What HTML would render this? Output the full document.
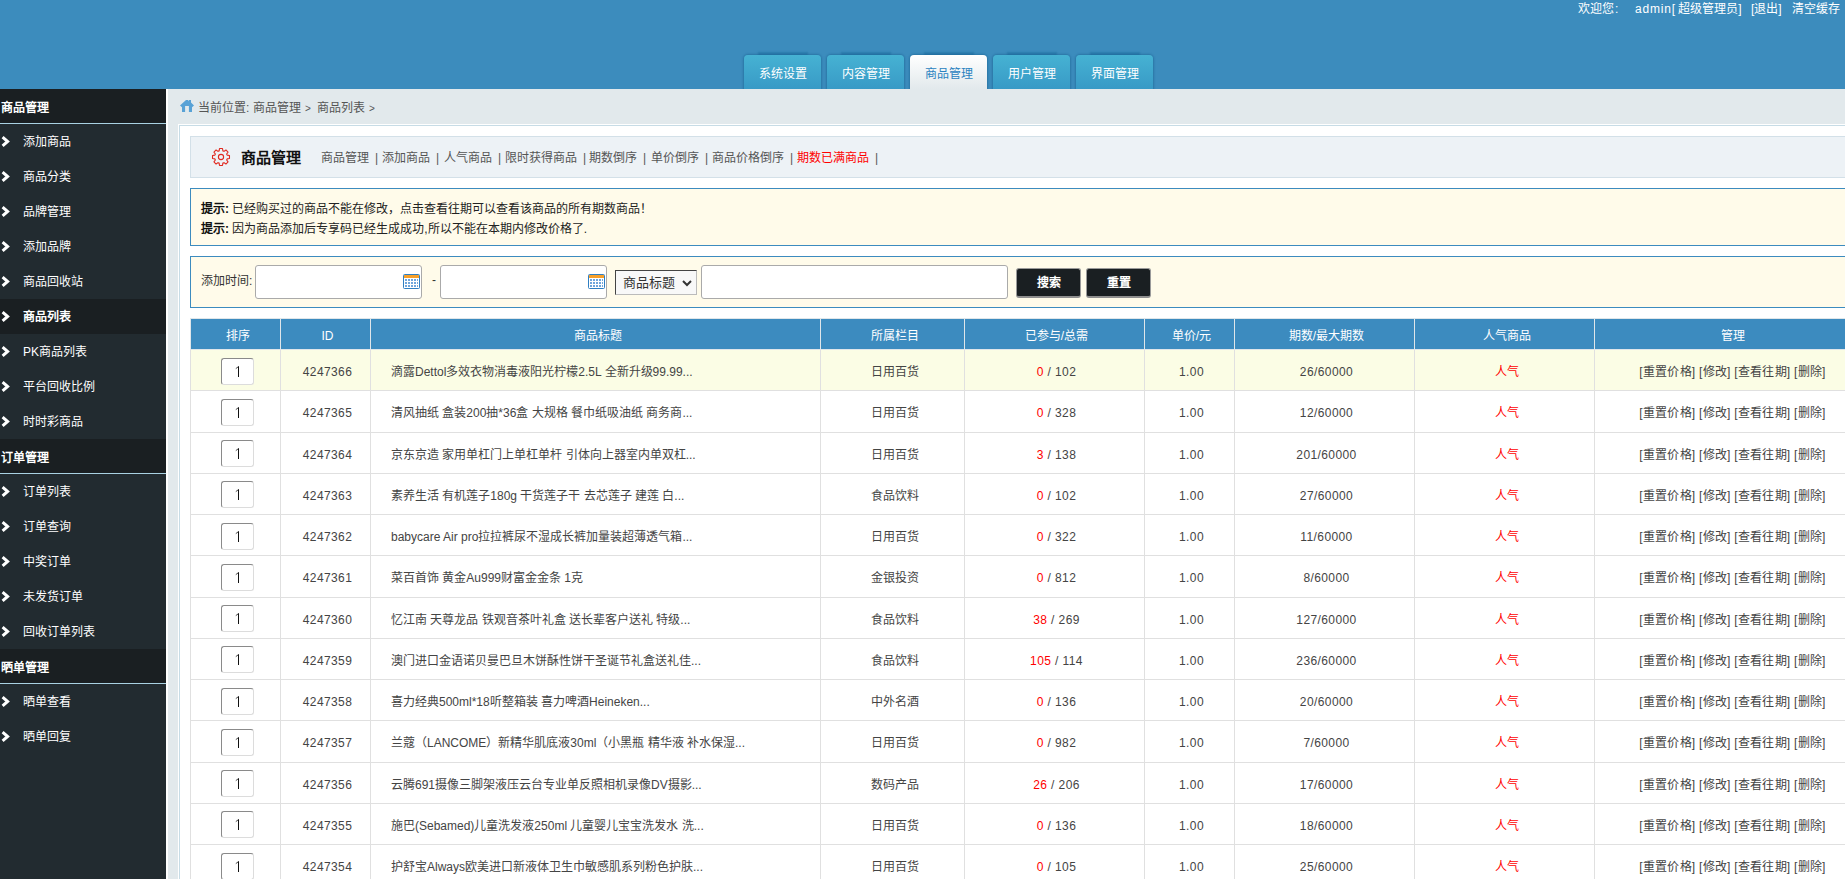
<!DOCTYPE html>
<html lang="zh-CN"><head><meta charset="utf-8"><title>商品列表</title>
<style>
*{margin:0;padding:0;box-sizing:border-box}
html,body{width:1845px;height:879px;overflow:hidden}
body{position:relative;font-family:"Liberation Sans",sans-serif;font-size:12px;color:#444;background:#e2e9ec}
#top{position:absolute;left:0;top:0;width:1845px;height:89px;background:#3c8cbd;overflow:hidden;z-index:0}
.welcome{position:absolute;right:6px;top:0;height:18px;line-height:18px;color:#fff;font-size:12px;white-space:nowrap}
.wl{position:absolute;top:0;height:18px;line-height:18px;color:#fff;font-size:12px;white-space:nowrap}
.tab{position:absolute;top:55px;width:77px;height:34px;border-radius:4px 4px 0 0;background:linear-gradient(#46b2d3,#389ac6);color:#fff;text-align:center;line-height:38px;font-size:12px;box-shadow:0 0 2px 1px rgba(20,90,140,.45)}
.tab:before{content:"";position:absolute;left:15px;right:14px;top:-2px;height:2px;background:rgba(10,90,140,.3);box-shadow:0 0 2px 1px rgba(10,90,140,.3);z-index:-1}
.tab.on{background:linear-gradient(#fff,#e2e9ec);color:#2a82c0;box-shadow:0 0 2px 1px rgba(20,90,140,.45)}
#side{position:absolute;left:0;top:89px;width:166px;height:790px;background:#222b30}
.sh{height:35px;line-height:35px;padding-top:2px;background:#1a1f22;border-bottom:1px solid #a9d2e3;color:#fff;font-weight:bold;padding-left:1px;font-size:12px}
.si{position:relative;height:35px;line-height:37px;color:#fff;padding-left:23px;font-size:12px}
.si.act{background:#1a1f22;font-weight:bold}
.chev{position:absolute;left:1px;top:12px}
#strip{position:absolute;left:166px;top:89px;width:2px;height:790px;background:#fff}
.crumb{position:absolute;left:180px;top:100px;height:16px;line-height:16px;color:#555;white-space:nowrap}
.crumb svg{position:absolute;left:0;top:-1px}
.crumb span{position:absolute;top:0;white-space:nowrap}
.crumb .gt{font-size:10px;top:1px !important}
#panel{position:absolute;left:178px;top:124px;width:1720px;height:800px;border:1px solid #fff;background:#fff}
#panel .in{position:absolute;left:0;top:0;right:0;bottom:0;border:1px solid #c7dce6}
.titlebox{position:absolute;left:190px;top:136px;width:1700px;height:42px;background:#edf2f6;border:1px solid #d3e0e8}
.gear{position:absolute;left:210px;top:146px}
.ttl{position:absolute;left:241px;top:149px;font-size:15px;font-weight:bold;color:#111;line-height:18px;white-space:nowrap}
.lk{position:absolute;top:150px;line-height:16px;white-space:nowrap;color:#555}
.sep{position:absolute;top:150px;line-height:16px;color:#555}
.notice{position:absolute;left:190px;top:188px;width:1700px;height:58px;background:#fffbea;border:1px solid #3c8bbf}
.nl{position:absolute;left:201px;line-height:16px;color:#222;white-space:nowrap}
.nl b{color:#111}
.search{position:absolute;left:190px;top:256px;width:1700px;height:52px;background:#fffbea;border:1px solid #3c8bbf}
.lbl{position:absolute;left:201px;top:273px;line-height:16px;color:#333;white-space:nowrap}
.inp{position:absolute;top:265px;height:34px;background:#fff;border:1px solid #aaa;border-radius:3px}
.cal{position:absolute}
.dash{position:absolute;left:432px;top:272px;line-height:16px;color:#333}
.sel{position:absolute;left:615px;top:270px;width:82px;height:25px;background:#f8f8f8;border:1px solid #bbb;border-top-color:#444;border-left-color:#444}
.sel span{position:absolute;left:7px;top:4px;line-height:16px;font-size:13px;color:#333;white-space:nowrap}
.sel svg{position:absolute;left:66px;top:9px}
.btn{position:absolute;top:268px;width:65px;height:30px;background:#1a1f22;border:1px solid #9a9a9a;border-bottom:2px solid #8f8f8f;border-radius:3px;color:#fff;font-weight:bold;text-align:center;line-height:28px}
table{position:absolute;left:190px;top:318px;border-collapse:collapse;table-layout:fixed;width:1676px}
th{height:31px;padding-top:4px;padding-left:4px;background:#3c8bbf;color:#fff;font-weight:normal;border:1px solid #dfe6ea;font-size:12px;line-height:16px}
td{height:41.25px;padding-top:4px;padding-left:4px;border:1px solid #e0e0e0;text-align:center;color:#444;font-size:12px;line-height:16px;white-space:nowrap;overflow:hidden}
tr.hl td{background:#fbfde5}
td.tl{text-align:left;padding-left:20px}
.red{color:#f00}
td.red{color:#f00}
td.mg{letter-spacing:.25px}
.ord{display:inline-block;width:33px;height:27px;border:1px solid #8a8a8a;border-right-color:#dcdcdc;border-bottom-color:#dcdcdc;border-radius:3px;background:#fff;vertical-align:middle;position:relative;top:-1px}
.ord svg{position:absolute;left:13px;top:7px}
.num{letter-spacing:.4px}
</style></head><body>
<div id="top">
 <span class="wl" style="left:1578px">欢迎您</span><span class="wl" style="left:1615px">:</span><span class="wl" style="left:1635px"><span style="letter-spacing:.8px">admin</span>[ 超级管理员]</span><span class="wl" style="left:1751px">[退出]</span><span class="wl" style="left:1792px">清空缓存</span>
 <div class="tab" style="left:744px">系统设置</div>
 <div class="tab" style="left:827px">内容管理</div>
 <div class="tab on" style="left:910px">商品管理</div>
 <div class="tab" style="left:993px">用户管理</div>
 <div class="tab" style="left:1076px">界面管理</div>
</div>
<div id="side"><div class="sh">商品管理</div><div class="si"><svg class="chev" width="9" height="11" viewBox="0 0 9 11"><path d="M1.6 1.2 L6.6 5.5 L1.6 9.8" fill="none" stroke="#fff" stroke-width="3" stroke-linejoin="miter"/></svg><span>添加商品</span></div><div class="si"><svg class="chev" width="9" height="11" viewBox="0 0 9 11"><path d="M1.6 1.2 L6.6 5.5 L1.6 9.8" fill="none" stroke="#fff" stroke-width="3" stroke-linejoin="miter"/></svg><span>商品分类</span></div><div class="si"><svg class="chev" width="9" height="11" viewBox="0 0 9 11"><path d="M1.6 1.2 L6.6 5.5 L1.6 9.8" fill="none" stroke="#fff" stroke-width="3" stroke-linejoin="miter"/></svg><span>品牌管理</span></div><div class="si"><svg class="chev" width="9" height="11" viewBox="0 0 9 11"><path d="M1.6 1.2 L6.6 5.5 L1.6 9.8" fill="none" stroke="#fff" stroke-width="3" stroke-linejoin="miter"/></svg><span>添加品牌</span></div><div class="si"><svg class="chev" width="9" height="11" viewBox="0 0 9 11"><path d="M1.6 1.2 L6.6 5.5 L1.6 9.8" fill="none" stroke="#fff" stroke-width="3" stroke-linejoin="miter"/></svg><span>商品回收站</span></div><div class="si act"><svg class="chev" width="9" height="11" viewBox="0 0 9 11"><path d="M1.6 1.2 L6.6 5.5 L1.6 9.8" fill="none" stroke="#fff" stroke-width="3" stroke-linejoin="miter"/></svg><span>商品列表</span></div><div class="si"><svg class="chev" width="9" height="11" viewBox="0 0 9 11"><path d="M1.6 1.2 L6.6 5.5 L1.6 9.8" fill="none" stroke="#fff" stroke-width="3" stroke-linejoin="miter"/></svg><span>PK商品列表</span></div><div class="si"><svg class="chev" width="9" height="11" viewBox="0 0 9 11"><path d="M1.6 1.2 L6.6 5.5 L1.6 9.8" fill="none" stroke="#fff" stroke-width="3" stroke-linejoin="miter"/></svg><span>平台回收比例</span></div><div class="si"><svg class="chev" width="9" height="11" viewBox="0 0 9 11"><path d="M1.6 1.2 L6.6 5.5 L1.6 9.8" fill="none" stroke="#fff" stroke-width="3" stroke-linejoin="miter"/></svg><span>时时彩商品</span></div><div class="sh">订单管理</div><div class="si"><svg class="chev" width="9" height="11" viewBox="0 0 9 11"><path d="M1.6 1.2 L6.6 5.5 L1.6 9.8" fill="none" stroke="#fff" stroke-width="3" stroke-linejoin="miter"/></svg><span>订单列表</span></div><div class="si"><svg class="chev" width="9" height="11" viewBox="0 0 9 11"><path d="M1.6 1.2 L6.6 5.5 L1.6 9.8" fill="none" stroke="#fff" stroke-width="3" stroke-linejoin="miter"/></svg><span>订单查询</span></div><div class="si"><svg class="chev" width="9" height="11" viewBox="0 0 9 11"><path d="M1.6 1.2 L6.6 5.5 L1.6 9.8" fill="none" stroke="#fff" stroke-width="3" stroke-linejoin="miter"/></svg><span>中奖订单</span></div><div class="si"><svg class="chev" width="9" height="11" viewBox="0 0 9 11"><path d="M1.6 1.2 L6.6 5.5 L1.6 9.8" fill="none" stroke="#fff" stroke-width="3" stroke-linejoin="miter"/></svg><span>未发货订单</span></div><div class="si"><svg class="chev" width="9" height="11" viewBox="0 0 9 11"><path d="M1.6 1.2 L6.6 5.5 L1.6 9.8" fill="none" stroke="#fff" stroke-width="3" stroke-linejoin="miter"/></svg><span>回收订单列表</span></div><div class="sh">晒单管理</div><div class="si"><svg class="chev" width="9" height="11" viewBox="0 0 9 11"><path d="M1.6 1.2 L6.6 5.5 L1.6 9.8" fill="none" stroke="#fff" stroke-width="3" stroke-linejoin="miter"/></svg><span>晒单查看</span></div><div class="si"><svg class="chev" width="9" height="11" viewBox="0 0 9 11"><path d="M1.6 1.2 L6.6 5.5 L1.6 9.8" fill="none" stroke="#fff" stroke-width="3" stroke-linejoin="miter"/></svg><span>晒单回复</span></div></div>
<div id="strip"></div>
<div class="crumb"><svg width="15" height="14" viewBox="0 0 15 14"><path d="M0 6.6 L6 1 L8.1 1 L8.6 2.2 L9.1 1 L11 1 L11 3.6 L14 6.6 L12 8.2 L12 13 L8.9 13 L8.9 6.9 L5.1 6.9 L5.1 13 L2 13 L2 8.2 Z" fill="#58a2d6"/></svg><span style="left:18px">当前位置:</span><span style="left:73px">商品管理</span><span class="gt" style="left:125px">&gt;</span><span style="left:137px">商品列表</span><span class="gt" style="left:189px">&gt;</span></div>
<div id="panel"><div class="in"></div></div>
<div class="titlebox"></div>
<svg class="gear" width="22" height="22" viewBox="0 0 22 22"><path d="M9.13 4.88 L9.51 2.53 L12.49 2.53 L12.87 4.88 L14.00 5.35 L15.93 3.96 L18.04 6.07 L16.65 8.00 L17.12 9.13 L19.47 9.51 L19.47 12.49 L17.12 12.87 L16.65 14.00 L18.04 15.93 L15.93 18.04 L14.00 16.65 L12.87 17.12 L12.49 19.47 L9.51 19.47 L9.13 17.12 L8.00 16.65 L6.07 18.04 L3.96 15.93 L5.35 14.00 L4.88 12.87 L2.53 12.49 L2.53 9.51 L4.88 9.13 L5.35 8.00 L3.96 6.07 L6.07 3.96 L8.00 5.35 Z" fill="none" stroke="#e0281f" stroke-width="1.1" stroke-linejoin="round"/><circle cx="11" cy="11" r="2.6" fill="none" stroke="#e0281f" stroke-width="1.1"/></svg>
<div class="ttl">商品管理</div>
<span class="lk" style="left:321px">商品管理</span><span class="sep" style="left:375px">|</span><span class="lk" style="left:382px">添加商品</span><span class="sep" style="left:436px">|</span><span class="lk" style="left:444px">人气商品</span><span class="sep" style="left:498px">|</span><span class="lk" style="left:505px">限时获得商品</span><span class="sep" style="left:583px">|</span><span class="lk" style="left:589px">期数倒序</span><span class="sep" style="left:643px">|</span><span class="lk" style="left:651px">单价倒序</span><span class="sep" style="left:705px">|</span><span class="lk" style="left:712px">商品价格倒序</span><span class="sep" style="left:790px">|</span><span class="lk" style="left:797px;color:#f00">期数已满商品</span><span class="sep" style="left:875px">|</span>
<div class="notice"></div>
<div class="nl" style="top:201px"><b>提示:</b> 已经购买过的商品不能在修改，点击查看往期可以查看该商品的所有期数商品！</div>
<div class="nl" style="top:221px"><b>提示:</b> 因为商品添加后专享码已经生成成功,所以不能在本期内修改价格了.</div>
<div class="search"></div>
<div class="lbl">添加时间:</div>
<div class="inp" style="left:255px;width:167px"></div>
<div class="inp" style="left:440px;width:167px"></div>
<svg class="cal" style="left:403px;top:274px" width="17" height="15" viewBox="0 0 17 15"><rect x="0.5" y="0.5" width="16" height="14" rx="1" fill="#fff" stroke="#2f7fc2"/><rect x="1" y="1" width="15" height="3" fill="#f7a02a"/><g fill="#6fa6dc"><rect x="2" y="5" width="13" height="8"/></g><g fill="#fff"><rect x="4" y="5" width="1" height="8"/><rect x="7" y="5" width="1" height="8"/><rect x="10" y="5" width="1" height="8"/><rect x="13" y="5" width="1" height="8"/><rect x="2" y="7" width="13" height="1"/><rect x="2" y="10" width="13" height="1"/></g></svg>
<svg class="cal" style="left:588px;top:274px" width="17" height="15" viewBox="0 0 17 15"><rect x="0.5" y="0.5" width="16" height="14" rx="1" fill="#fff" stroke="#2f7fc2"/><rect x="1" y="1" width="15" height="3" fill="#f7a02a"/><g fill="#6fa6dc"><rect x="2" y="5" width="13" height="8"/></g><g fill="#fff"><rect x="4" y="5" width="1" height="8"/><rect x="7" y="5" width="1" height="8"/><rect x="10" y="5" width="1" height="8"/><rect x="13" y="5" width="1" height="8"/><rect x="2" y="7" width="13" height="1"/><rect x="2" y="10" width="13" height="1"/></g></svg>
<div class="dash">-</div>
<div class="sel"><span>商品标题</span><svg width="10" height="7" viewBox="0 0 10 7"><path d="M1 1 L5 5 L9 1" fill="none" stroke="#333" stroke-width="2"/></svg></div>
<div class="inp" style="left:701px;width:307px"></div>
<div class="btn" style="left:1016px">搜索</div>
<div class="btn" style="left:1086px">重置</div>
<table>
<colgroup><col style="width:90px"><col style="width:90px"><col style="width:450px"><col style="width:144px"><col style="width:180px"><col style="width:90px"><col style="width:180px"><col style="width:180px"><col style="width:272px"></colgroup>
<tr><th>排序</th><th>ID</th><th>商品标题</th><th>所属栏目</th><th>已参与/总需</th><th>单价/元</th><th>期数/最大期数</th><th>人气商品</th><th>管理</th></tr>
<tr class="hl"><td><span class="ord"><svg width="6" height="12" viewBox="0 0 6 12"><path d="M3.5 0.3 V11" stroke="#111" stroke-width="1"/><path d="M3.5 0.6 L0.8 2.6" stroke="#333" stroke-width="0.9"/></svg></span></td><td class="num">4247366</td><td class="tl">滴露Dettol多效衣物消毒液阳光柠檬2.5L 全新升级99.99...</td><td>日用百货</td><td class="num"><span class="red">0</span> / 102</td><td class="num">1.00</td><td class="num">26/60000</td><td class="red">人气</td><td class="mg">[重置价格] [修改] [查看往期] [删除]</td></tr><tr><td><span class="ord"><svg width="6" height="12" viewBox="0 0 6 12"><path d="M3.5 0.3 V11" stroke="#111" stroke-width="1"/><path d="M3.5 0.6 L0.8 2.6" stroke="#333" stroke-width="0.9"/></svg></span></td><td class="num">4247365</td><td class="tl">清风抽纸 盒装200抽*36盒 大规格 餐巾纸吸油纸 商务商...</td><td>日用百货</td><td class="num"><span class="red">0</span> / 328</td><td class="num">1.00</td><td class="num">12/60000</td><td class="red">人气</td><td class="mg">[重置价格] [修改] [查看往期] [删除]</td></tr><tr><td><span class="ord"><svg width="6" height="12" viewBox="0 0 6 12"><path d="M3.5 0.3 V11" stroke="#111" stroke-width="1"/><path d="M3.5 0.6 L0.8 2.6" stroke="#333" stroke-width="0.9"/></svg></span></td><td class="num">4247364</td><td class="tl">京东京造 家用单杠门上单杠单杆 引体向上器室内单双杠...</td><td>日用百货</td><td class="num"><span class="red">3</span> / 138</td><td class="num">1.00</td><td class="num">201/60000</td><td class="red">人气</td><td class="mg">[重置价格] [修改] [查看往期] [删除]</td></tr><tr><td><span class="ord"><svg width="6" height="12" viewBox="0 0 6 12"><path d="M3.5 0.3 V11" stroke="#111" stroke-width="1"/><path d="M3.5 0.6 L0.8 2.6" stroke="#333" stroke-width="0.9"/></svg></span></td><td class="num">4247363</td><td class="tl">素养生活 有机莲子180g 干货莲子干 去芯莲子 建莲 白...</td><td>食品饮料</td><td class="num"><span class="red">0</span> / 102</td><td class="num">1.00</td><td class="num">27/60000</td><td class="red">人气</td><td class="mg">[重置价格] [修改] [查看往期] [删除]</td></tr><tr><td><span class="ord"><svg width="6" height="12" viewBox="0 0 6 12"><path d="M3.5 0.3 V11" stroke="#111" stroke-width="1"/><path d="M3.5 0.6 L0.8 2.6" stroke="#333" stroke-width="0.9"/></svg></span></td><td class="num">4247362</td><td class="tl">babycare Air pro拉拉裤尿不湿成长裤加量装超薄透气箱...</td><td>日用百货</td><td class="num"><span class="red">0</span> / 322</td><td class="num">1.00</td><td class="num">11/60000</td><td class="red">人气</td><td class="mg">[重置价格] [修改] [查看往期] [删除]</td></tr><tr><td><span class="ord"><svg width="6" height="12" viewBox="0 0 6 12"><path d="M3.5 0.3 V11" stroke="#111" stroke-width="1"/><path d="M3.5 0.6 L0.8 2.6" stroke="#333" stroke-width="0.9"/></svg></span></td><td class="num">4247361</td><td class="tl">菜百首饰 黄金Au999财富金金条 1克</td><td>金银投资</td><td class="num"><span class="red">0</span> / 812</td><td class="num">1.00</td><td class="num">8/60000</td><td class="red">人气</td><td class="mg">[重置价格] [修改] [查看往期] [删除]</td></tr><tr><td><span class="ord"><svg width="6" height="12" viewBox="0 0 6 12"><path d="M3.5 0.3 V11" stroke="#111" stroke-width="1"/><path d="M3.5 0.6 L0.8 2.6" stroke="#333" stroke-width="0.9"/></svg></span></td><td class="num">4247360</td><td class="tl">忆江南 天尊龙品 铁观音茶叶礼盒 送长辈客户送礼 特级...</td><td>食品饮料</td><td class="num"><span class="red">38</span> / 269</td><td class="num">1.00</td><td class="num">127/60000</td><td class="red">人气</td><td class="mg">[重置价格] [修改] [查看往期] [删除]</td></tr><tr><td><span class="ord"><svg width="6" height="12" viewBox="0 0 6 12"><path d="M3.5 0.3 V11" stroke="#111" stroke-width="1"/><path d="M3.5 0.6 L0.8 2.6" stroke="#333" stroke-width="0.9"/></svg></span></td><td class="num">4247359</td><td class="tl">澳门进口金语诺贝曼巴旦木饼酥性饼干圣诞节礼盒送礼佳...</td><td>食品饮料</td><td class="num"><span class="red">105</span> / 114</td><td class="num">1.00</td><td class="num">236/60000</td><td class="red">人气</td><td class="mg">[重置价格] [修改] [查看往期] [删除]</td></tr><tr><td><span class="ord"><svg width="6" height="12" viewBox="0 0 6 12"><path d="M3.5 0.3 V11" stroke="#111" stroke-width="1"/><path d="M3.5 0.6 L0.8 2.6" stroke="#333" stroke-width="0.9"/></svg></span></td><td class="num">4247358</td><td class="tl">喜力经典500ml*18听整箱装 喜力啤酒Heineken...</td><td>中外名酒</td><td class="num"><span class="red">0</span> / 136</td><td class="num">1.00</td><td class="num">20/60000</td><td class="red">人气</td><td class="mg">[重置价格] [修改] [查看往期] [删除]</td></tr><tr><td><span class="ord"><svg width="6" height="12" viewBox="0 0 6 12"><path d="M3.5 0.3 V11" stroke="#111" stroke-width="1"/><path d="M3.5 0.6 L0.8 2.6" stroke="#333" stroke-width="0.9"/></svg></span></td><td class="num">4247357</td><td class="tl">兰蔻（LANCOME）新精华肌底液30ml（小黑瓶 精华液 补水保湿...</td><td>日用百货</td><td class="num"><span class="red">0</span> / 982</td><td class="num">1.00</td><td class="num">7/60000</td><td class="red">人气</td><td class="mg">[重置价格] [修改] [查看往期] [删除]</td></tr><tr><td><span class="ord"><svg width="6" height="12" viewBox="0 0 6 12"><path d="M3.5 0.3 V11" stroke="#111" stroke-width="1"/><path d="M3.5 0.6 L0.8 2.6" stroke="#333" stroke-width="0.9"/></svg></span></td><td class="num">4247356</td><td class="tl">云腾691摄像三脚架液压云台专业单反照相机录像DV摄影...</td><td>数码产品</td><td class="num"><span class="red">26</span> / 206</td><td class="num">1.00</td><td class="num">17/60000</td><td class="red">人气</td><td class="mg">[重置价格] [修改] [查看往期] [删除]</td></tr><tr><td><span class="ord"><svg width="6" height="12" viewBox="0 0 6 12"><path d="M3.5 0.3 V11" stroke="#111" stroke-width="1"/><path d="M3.5 0.6 L0.8 2.6" stroke="#333" stroke-width="0.9"/></svg></span></td><td class="num">4247355</td><td class="tl">施巴(Sebamed)儿童洗发液250ml 儿童婴儿宝宝洗发水 洗...</td><td>日用百货</td><td class="num"><span class="red">0</span> / 136</td><td class="num">1.00</td><td class="num">18/60000</td><td class="red">人气</td><td class="mg">[重置价格] [修改] [查看往期] [删除]</td></tr><tr><td><span class="ord"><svg width="6" height="12" viewBox="0 0 6 12"><path d="M3.5 0.3 V11" stroke="#111" stroke-width="1"/><path d="M3.5 0.6 L0.8 2.6" stroke="#333" stroke-width="0.9"/></svg></span></td><td class="num">4247354</td><td class="tl">护舒宝Always欧美进口新液体卫生巾敏感肌系列粉色护肤...</td><td>日用百货</td><td class="num"><span class="red">0</span> / 105</td><td class="num">1.00</td><td class="num">25/60000</td><td class="red">人气</td><td class="mg">[重置价格] [修改] [查看往期] [删除]</td></tr>
</table>
</body></html>
